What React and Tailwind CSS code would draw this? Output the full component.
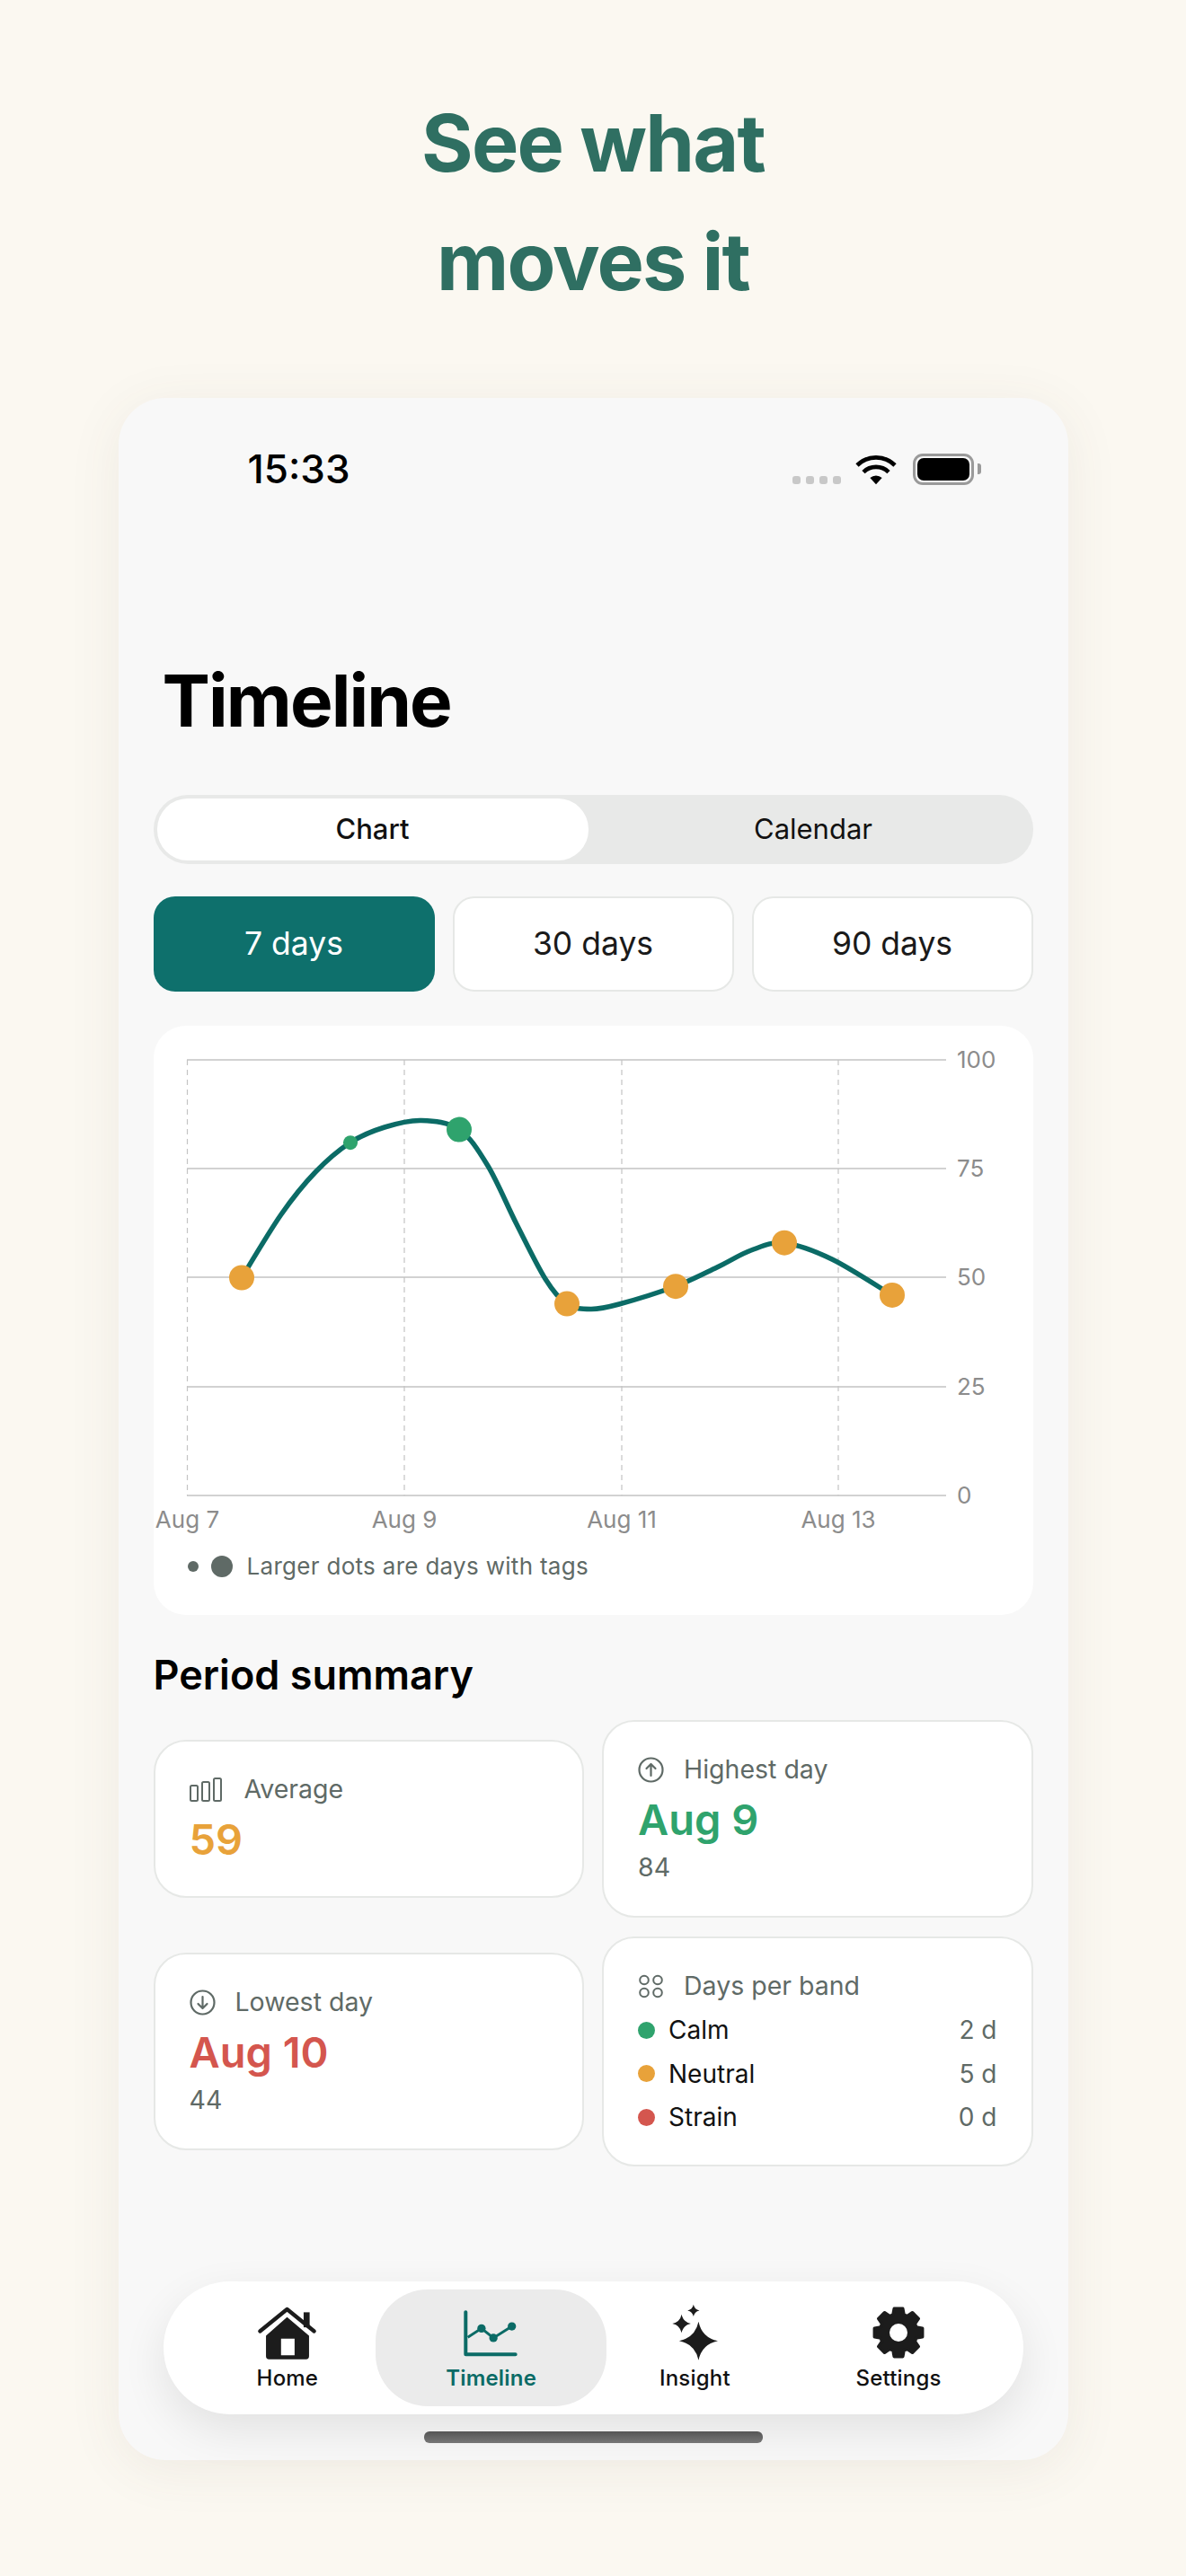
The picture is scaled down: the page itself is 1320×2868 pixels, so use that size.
import React from 'react'

const font = { fontFamily: 'Inter, sans-serif' }

// days on the chart, x/y are px inside the chart svg
const days = [
  { x: 98, v: 50, color: '#e8a23a', r: 14 },
  { x: 219, v: 81, color: '#2fa36d', r: 8 },
  { x: 340, v: 84, color: '#2fa36d', r: 14 },
  { x: 460, v: 44, color: '#e8a23a', r: 14 },
  { x: 581, v: 48, color: '#e8a23a', r: 14 },
  { x: 702, v: 58, color: '#e8a23a', r: 14 },
  { x: 822, v: 46, color: '#e8a23a', r: 14 },
]
const yFor = v => 523 - (v / 100) * 485

// line knots, denser than the days so the bends land where they should
const knots = [
  [98, 280.5], [142, 210], [180, 163], [219, 130], [257, 113], [298, 105.5], [340, 115.5],
  [372, 156], [404, 221], [436, 282], [460, 310], [487, 315.5], [518, 310], [581, 290],
  [627, 269], [665, 250], [702, 242], [755, 260], [822, 300],
]

const curvePath = () => {
  let out = `M${knots[0][0]} ${knots[0][1]}`
  for (let i = 0; i < knots.length - 1; i++) {
    const p0 = knots[i - 1] || knots[i]
    const p1 = knots[i]
    const p2 = knots[i + 1]
    const p3 = knots[i + 2] || p2
    const c1 = [p1[0] + (p2[0] - p0[0]) / 6, p1[1] + (p2[1] - p0[1]) / 6]
    const c2 = [p2[0] - (p3[0] - p1[0]) / 6, p2[1] - (p3[1] - p1[1]) / 6]
    out += `C${c1[0]} ${c1[1]} ${c2[0]} ${c2[1]} ${p2[0]} ${p2[1]}`
  }
  return out
}

const star = (cx, cy, r) => {
  const k = r * 0.17
  return `M${cx} ${cy - r}Q${cx + k} ${cy - k} ${cx + r} ${cy}Q${cx + k} ${cy + k} ${cx} ${cy + r}Q${cx - k} ${cy + k} ${cx - r} ${cy}Q${cx - k} ${cy - k} ${cx} ${cy - r}Z`
}

const gear = (cx, cy) => {
  const pt = (rad, deg) => {
    const a = ((deg - 90) * Math.PI) / 180
    return `${(cx + rad * Math.cos(a)).toFixed(1)} ${(cy + rad * Math.sin(a)).toFixed(1)}`
  }
  let d = ''
  for (let i = 0; i < 8; i++) {
    const a = i * 45
    d += `${i ? 'L' : 'M'}${pt(62, a - 17)}L${pt(81, a - 10)}L${pt(81, a + 10)}L${pt(62, a + 17)}`
  }
  return `${d}Z`
}

const HomeIcon = () => (
  <svg width="67" height="61" viewBox="50 50 200 182">
    <path d="M205 72h20v50h-20z" fill="#1c1c1c" />
    <path d="M60 135 150 62l90 73" fill="none" stroke="#1c1c1c" strokeWidth="13" strokeLinecap="round" strokeLinejoin="round" />
    <path fillRule="evenodd" d="M150 88 223 150v68a10 10 0 0 1-10 10H90a10 10 0 0 1-10-10v-68ZM130 160v55h45v-55Z" fill="#1c1c1c" />
  </svg>
)

const TimelineIcon = () => (
  <svg width="63" height="55" viewBox="735 58 190 165">
    <path d="M745 70v142h167" fill="none" stroke="#0b6b66" strokeWidth="12" strokeLinecap="round" strokeLinejoin="round" />
    <path d="M752 155l46-30 40 32 62-39" fill="none" stroke="#0b6b66" strokeWidth="9" />
    <circle cx="798" cy="125" r="14" fill="#0b6b66" />
    <circle cx="838" cy="157" r="14" fill="#0b6b66" />
    <circle cx="900" cy="118" r="14" fill="#0b6b66" />
  </svg>
)

const InsightIcon = () => (
  <svg width="53" height="64" viewBox="80 40 160 192" fill="#1c1c1c">
    <path d={star(172, 164, 65)} />
    <path d={star(115, 106, 31)} />
    <path d={star(155, 62, 20)} />
  </svg>
)

const SettingsIcon = () => (
  <svg width="60" height="60" viewBox="748 52 180 180">
    <path d={gear(838, 142)} fill="#1c1c1c" stroke="#1c1c1c" strokeWidth="11" strokeLinejoin="round" />
    <circle cx="838" cy="142" r="30" fill="#fff" />
  </svg>
)

const BarsIcon = () => (
  <svg width="36" height="27" viewBox="0 0 36 27" fill="none" stroke="#5f6a66" strokeWidth="2">
    <rect x="1" y="9" width="8" height="17" rx="1.5" />
    <rect x="14" y="5" width="8" height="21" rx="1.5" />
    <rect x="27" y="1" width="8" height="25" rx="1.5" />
  </svg>
)

const ArrowCircle = ({ up }) => (
  <svg width="29" height="29" viewBox="0 0 29 29" fill="none" stroke="#5f6a66" strokeWidth="2.2" strokeLinecap="round" strokeLinejoin="round">
    <circle cx="14.5" cy="14.5" r="13" />
    {up ? <path d="M14.5 21V8.5M9.5 13l5-5 5 5" /> : <path d="M14.5 8v12.5M9.5 16l5 5 5-5" />}
  </svg>
)

const BandsIcon = () => (
  <svg width="29" height="29" viewBox="0 0 29 29" fill="none" stroke="#5f6a66" strokeWidth="2">
    <circle cx="7" cy="7.5" r="4.8" />
    <circle cx="22" cy="7.5" r="4.8" />
    <circle cx="7" cy="21.5" r="4.8" />
    <circle cx="22" cy="21.5" r="4.8" />
  </svg>
)

const StatusBar = () => (
  <div className="h-[158px] flex items-center justify-between pl-[144px] pr-[97px]">
    <span className="text-[44px] font-medium text-black leading-none">15:33</span>
    <div className="flex items-center">
      <div className="flex gap-[6px] mt-[24px] mr-[15px]">
        <i className="block w-[9px] h-[9px] rounded-[3px] bg-[#c8c8c8]" />
        <i className="block w-[9px] h-[9px] rounded-[3px] bg-[#c8c8c8]" />
        <i className="block w-[9px] h-[9px] rounded-[3px] bg-[#c8c8c8]" />
        <i className="block w-[9px] h-[9px] rounded-[3px] bg-[#c8c8c8]" />
      </div>
      <svg width="48" height="36" viewBox="332 68 144 104" className="mr-[17px]">
        <g fill="none" stroke="#000" strokeWidth="14">
          <path d="M341 108a90 90 0 0 1 126 0" />
          <path d="M362 131a60 60 0 0 1 84 0" />
        </g>
        <path d="M384 150a30 30 0 0 1 40 0l-20 22Z" fill="#000" />
      </svg>
      <div className="w-[68px] h-[35px] rounded-[11px] border-[3px] border-[#9a9a9a] p-[2px]">
        <div className="w-full h-full rounded-[7px] bg-black" />
      </div>
      <div className="w-[4px] h-[12px] rounded-r-[3px] bg-[#9a9a9a] ml-[4px]" />
    </div>
  </div>
)

const Chart = () => (
  <section className="mt-[38px] h-[656px] bg-white rounded-[36px]">
    <svg width="979" height="590" style={font}>
      {[38, 159, 280, 402, 523].map(y => (
        <line key={y} x1="37" x2="882" y1={y} y2={y} stroke="#d2d2d2" strokeWidth="2" />
      ))}
      {[37.5, 279, 521, 762].map(x => (
        <line key={x} x1={x} x2={x} y1="38" y2="523" stroke="#c4c4c4" strokeWidth="1.2" strokeDasharray="6 5" />
      ))}
      <path d={curvePath()} fill="none" stroke="#0b6b66" strokeWidth="5.5" />
      {days.map(d => (
        <circle key={d.x} cx={d.x} cy={yFor(d.v)} r={d.r} fill={d.color} />
      ))}
      {[
        [100, 38],
        [75, 159],
        [50, 280],
        [25, 402],
        [0, 523],
      ].map(([t, y]) => (
        <text key={t} x="894" y={y + 9} fontSize="26" fill="#8c8c8c">
          {t}
        </text>
      ))}
      {[
        ['Aug 7', 37.5],
        ['Aug 9', 279],
        ['Aug 11', 521],
        ['Aug 13', 762],
      ].map(([t, x]) => (
        <text key={t} x={x} y="559" fontSize="26" textAnchor="middle" fill="#8c8c8c">
          {t}
        </text>
      ))}
    </svg>
    <div className="flex items-center pl-[38px] mt-[-4px]">
      <i className="block w-[12px] h-[12px] rounded-full bg-[#5f6a66]" />
      <i className="block w-[24px] h-[24px] rounded-full bg-[#5f6a66] ml-[14px]" />
      <span className="text-[26px] leading-[32px] tracking-[0.3px] text-[#5f6a66] ml-[16px]">Larger dots are days with tags</span>
    </div>
  </section>
)

const Card = ({ icon, label, wide, children }) => (
  <div className="bg-white border-2 border-[#e6e8e6] rounded-[36px] px-[38px] py-[34px]">
    <div className={wide ? 'h-[38px] flex items-center gap-[25px]' : 'h-[38px] flex items-center gap-[22px]'}>
      {icon}
      <span className="text-[28.5px] leading-[38px] text-[#5f6a66]">{label}</span>
    </div>
    {children}
  </div>
)

const Band = ({ color, name, days }) => (
  <div className="flex items-center h-[38px]">
    <i className={`block w-[19px] h-[19px] rounded-full ${color}`} />
    <span className="text-[28px] text-[#111] ml-[15px] flex-1">{name}</span>
    <span className="text-[28px] text-[#5f6a66]">{days}</span>
  </div>
)

const Summary = () => (
  <section>
    <h2 className="mt-[39px] text-[45px] leading-[56px] font-semibold text-black">Period summary</h2>
    <div className="mt-[22px] grid grid-cols-2 gap-x-[20px] gap-y-[21px] items-center">
      <Card icon={<BarsIcon />} label="Average" wide>
        <p className="mt-[8px] text-[47px] leading-[58px] font-semibold text-[#e8a23a]">59</p>
      </Card>
      <Card icon={<ArrowCircle up />} label="Highest day">
        <p className="mt-[8px] text-[47px] leading-[58px] font-semibold text-[#2fa36d]">Aug 9</p>
        <p className="mt-[4px] text-[28.5px] leading-[40px] text-[#5f6a66]">84</p>
      </Card>
      <Card icon={<ArrowCircle />} label="Lowest day">
        <p className="mt-[8px] text-[47px] leading-[58px] font-semibold text-[#d4564e]">Aug 10</p>
        <p className="mt-[4px] text-[28.5px] leading-[40px] text-[#5f6a66]">44</p>
      </Card>
      <Card icon={<BandsIcon />} label="Days per band">
        <div className="mt-[11px] flex flex-col gap-[10.5px]">
          <Band color="bg-[#2fa36d]" name="Calm" days="2 d" />
          <Band color="bg-[#e8a23a]" name="Neutral" days="5 d" />
          <Band color="bg-[#d4564e]" name="Strain" days="0 d" />
        </div>
      </Card>
    </div>
  </section>
)

const NavItem = ({ icon, label, active }) => (
  <div className="relative flex flex-col items-center h-[130px] pt-[15px]">
    {active && <div className="absolute inset-y-0 -inset-x-[15px] rounded-[58px] bg-[#ebebeb]" />}
    <div className="relative h-[66px] flex items-center">{icon}</div>
    <span className={active ? 'relative mt-[3px] text-[24px] leading-[30px] tracking-[0.2px] font-semibold text-[#0b6b66]' : 'relative mt-[3px] text-[24px] leading-[30px] tracking-[0.2px] font-medium text-[#111]'}>
      {label}
    </span>
  </div>
)

const TabBar = () => (
  <nav className="mt-[128px] mx-[11px] h-[148px] rounded-[74px] bg-white px-[25px] py-[9px] grid grid-cols-4 shadow-[0_18px_50px_rgba(0,0,0,0.09)]">
    <NavItem icon={<HomeIcon />} label="Home" />
    <NavItem icon={<TimelineIcon />} label="Timeline" active />
    <NavItem icon={<InsightIcon />} label="Insight" />
    <NavItem icon={<SettingsIcon />} label="Settings" />
  </nav>
)

export default function App() {
  return (
    <div className="w-[1320px] h-[2868px] bg-[#fbf8f1] flex flex-col items-center overflow-hidden" style={font}>
      <h1 className="pt-[93px] text-[88px] leading-[132px] font-bold text-center text-[#2f6f62] tracking-[-1.8px]">
        See what
        <br />
        moves it
      </h1>
      <div className="mt-[86px] w-[1057px] h-[2296px] bg-[#f8f8f8] rounded-[52px] shadow-[0_10px_60px_rgba(90,80,60,0.08)]">
        <StatusBar />
        <div className="px-[39px]">
          <h2 className="mt-[131px] pl-[10px] text-[80px] leading-[96px] font-bold tracking-[-1.9px] text-black">Timeline</h2>

          <div className="mt-[57px] h-[77px] rounded-[38px] bg-[#e8e9e8] p-[4px] flex text-[31px] text-[#111]">
            <div className="w-[480px] rounded-[34px] bg-white flex items-center justify-center font-medium">Chart</div>
            <div className="flex-1 flex items-center justify-center pl-[10px]">Calendar</div>
          </div>

          <div className="mt-[36px] grid grid-cols-3 gap-[20px] text-[35.5px] text-[#1a1a1a]">
            <div className="h-[106px] rounded-[24px] bg-[#0e706c] text-white flex items-center justify-center">7 days</div>
            <div className="h-[106px] rounded-[24px] bg-white border-2 border-[#e6e8e6] flex items-center justify-center">30 days</div>
            <div className="h-[106px] rounded-[24px] bg-white border-2 border-[#e6e8e6] flex items-center justify-center">90 days</div>
          </div>

          <Chart />
          <Summary />
          <TabBar />
          <div className="mt-[19px] mx-auto w-[377px] h-[13px] rounded-[6px] bg-gradient-to-b from-[#555] to-[#777]" />
        </div>
      </div>
    </div>
  )
}
